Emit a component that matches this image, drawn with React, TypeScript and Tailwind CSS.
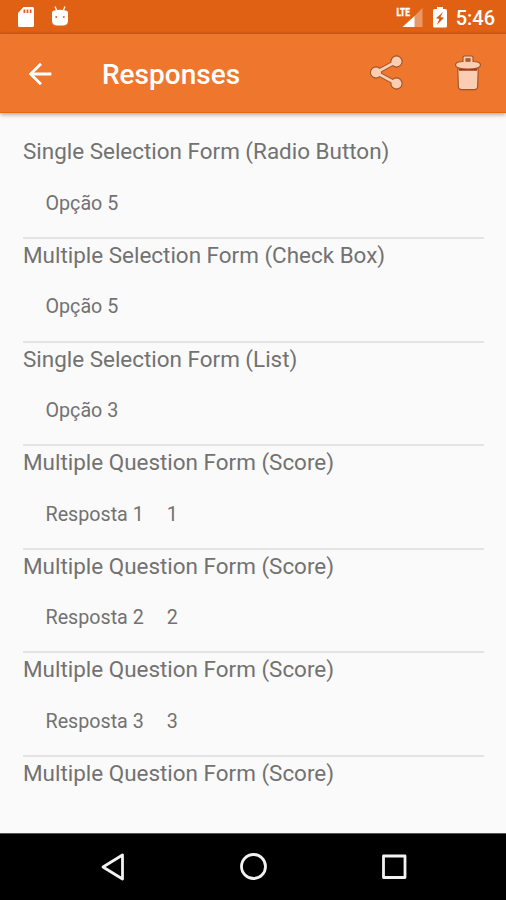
import React from "react";

interface Answer {
  title: string;
  values: string[];
}

const answers: Answer[] = [
  { title: "Single Selection Form (Radio Button)", values: ["Opção 5"] },
  { title: "Multiple Selection Form (Check Box)", values: ["Opção 5"] },
  { title: "Single Selection Form (List)", values: ["Opção 3"] },
  { title: "Multiple Question Form (Score)", values: ["Resposta 1", "1"] },
  { title: "Multiple Question Form (Score)", values: ["Resposta 2", "2"] },
  { title: "Multiple Question Form (Score)", values: ["Resposta 3", "3"] },
  { title: "Multiple Question Form (Score)", values: [] },
];

const StatusBar: React.FC = () => {
  return (
    <div className="flex h-[34px] shrink-0 items-start justify-between bg-linear-to-b from-[#e16114] from-90% to-[#cc5814] pl-[17px] pr-[11px] text-white">
      <div className="flex pt-1.5">
        <svg width="18" height="22" viewBox="0 0 18 22">
          <path
            fill="currentColor"
            fillRule="evenodd"
            d="M6.5 1H15.5Q17 1 17 2.5V19.5Q17 21 15.5 21H2.5Q1 21 1 19.5V7ZM6.5 3.5V7H8.3V3.5ZM9.6 3.5V7H11.4V3.5ZM12.8 3.5V7H14.5V3.5Z"
          />
        </svg>
        <svg className="ml-4" width="18" height="22" viewBox="0 0 18 22">
          <path d="M4 0.5L6 5M14 0.5L12 5" stroke="currentColor" strokeWidth="1.3" />
          <path
            fill="currentColor"
            d="M1 7Q1 4.5 3.5 4.5Q9 3 14.5 4.5Q17 4.5 17 7V14.5Q17 19.5 12 19.5H6Q1 19.5 1 14.5Z"
          />
          <circle cx="5.2" cy="11" r="1" fill="#d96a2c" />
          <circle cx="12.8" cy="11" r="1" fill="#d96a2c" />
        </svg>
      </div>
      <div className="flex pt-1.5">
        <svg width="28" height="22" viewBox="0 0 28 22">
          <path fill="currentColor" fillOpacity=".35" d="M26.5 2V21H18V10.5Z" />
          <path fill="currentColor" d="M18.5 10V21H6.5Z" />
          <text
            x="0.5"
            y="9.5"
            fill="currentColor"
            stroke="currentColor"
            strokeWidth="0.4"
            fontFamily="Roboto, sans-serif"
            fontSize="11.5"
            fontWeight="800"
            textLength="13.5"
            lengthAdjust="spacingAndGlyphs"
          >
            LTE
          </text>
        </svg>
        <svg className="ml-2" width="16" height="22" viewBox="0 0 16 22">
          <path
            fill="currentColor"
            d="M5 1H11V3H13Q15 3 15 5V20Q15 21.5 13.5 21.5H2.5Q1 21.5 1 20V5Q1 3 3 3H5Z"
          />
          <path fill="#dc5d18" d="M11 6L4 12.3L7.3 13L4.8 19L12 11.8L8.5 11Z" />
        </svg>
        <span className="ml-2 text-[20px] font-medium leading-6">5:46</span>
      </div>
    </div>
  );
};

const Toolbar: React.FC = () => {
  return (
    <header className="z-10 flex h-[79px] shrink-0 items-center border-b border-[#e6660f] bg-[#ef762d] pl-[23px] pr-[24px] pt-px shadow-[0_2px_4px_rgba(0,0,0,0.3)]">
      <svg width="34" height="34" viewBox="0 0 24 24" className="text-white">
        <path
          fill="currentColor"
          d="M20 11H7.83l5.59-5.59L12 4l-8 8 8 8 1.41-1.41L7.83 13H20v-2z"
        />
      </svg>
      <h1 className="ml-[45px] flex-1 pt-[3px] text-[28px] font-medium leading-8 text-white">
        Responses
      </h1>
      <svg className="mb-0.5" width="36" height="36" viewBox="0 0 36 36">
        <g fill="none" stroke="#9d5327" strokeWidth="4.8">
          <path d="M27.5 6.5L7 17.5L27.5 28.5" />
        </g>
        <g fill="#fbcdb2" stroke="#9d5327" strokeWidth="1.1">
          <circle cx="27.5" cy="6.5" r="5.6" />
          <circle cx="7" cy="17.5" r="5.6" />
          <circle cx="27.5" cy="28.5" r="5.6" />
        </g>
        <path
          d="M25 7.8L7 17.5L25 27.2"
          fill="none"
          stroke="#fbcdb2"
          strokeWidth="2.8"
          strokeLinejoin="round"
        />
      </svg>
      <svg className="mb-0.5 ml-[49px]" width="28" height="36" viewBox="0 0 28 36">
        <g fill="#fbcdb2" stroke="#9d5327" strokeWidth="1.1">
          <path d="M3.8 14H24.2L23.6 32Q23.4 34.6 20.5 34.6H7.5Q4.6 34.6 4.4 32Z" />
          <path d="M5 14.8H23" stroke="#a52f12" strokeWidth="1.8" />
          <path d="M9 6.5V2.5Q9 1 10.5 1H17.5Q19 1 19 2.5V6.5C23.5 6.5 26.5 8 26.5 10C26.5 12.5 21 14 14 14S1.5 12.5 1.5 10C1.5 8 4.5 6.5 9 6.5Z" />
          <path d="M12 3.8H16V6.2H12Z" fill="#b56032" />
        </g>
      </svg>
    </header>
  );
};

const AnswerRow: React.FC<Answer> = ({ title, values }) => {
  return (
    <li className="h-[103.6px] border-b-2 border-[#e4e4e4] pt-px last:border-b-0">
      <h2 className="text-[22.45px] leading-[30px]">{title}</h2>
      <div className="flex gap-[23px] pl-[22.5px] pt-[23.5px] text-[19.7px] leading-7">
        {values.map((value) => (
          <span key={value}>{value}</span>
        ))}
      </div>
    </li>
  );
};

const NavigationBar: React.FC = () => {
  return (
    <nav className="flex h-[67px] shrink-0 items-center justify-center gap-[110px] border-t border-[#555] bg-black pl-0.5 text-[#f2f2f2]">
      <svg width="30" height="30" viewBox="0 0 30 30" fill="none" stroke="currentColor" strokeWidth="2.8" strokeLinejoin="round">
        <path d="M23.5 3V27L4 15Z" />
      </svg>
      <svg width="30" height="30" viewBox="0 0 30 30" fill="none" stroke="currentColor" strokeWidth="2.8">
        <circle cx="14.5" cy="14.5" r="12" />
      </svg>
      <svg width="30" height="30" viewBox="0 0 30 30" fill="none" stroke="currentColor" strokeWidth="2.8" strokeLinejoin="round">
        <rect x="4.5" y="4" width="21.5" height="21.5" />
      </svg>
    </nav>
  );
};

const App: React.FC = () => {
  return (
    <div className="flex h-[900px] w-[506px] flex-col overflow-hidden bg-[#fafafa] font-['Roboto',sans-serif] text-[#727272]">
      <StatusBar />
      <Toolbar />
      <main className="min-h-0 flex-1 overflow-hidden pl-[23px] pr-[22px] pt-[22.4px]">
        <ul>
          {answers.map((answer, index) => (
            <AnswerRow key={index} {...answer} />
          ))}
        </ul>
      </main>
      <NavigationBar />
    </div>
  );
};

export default App;
